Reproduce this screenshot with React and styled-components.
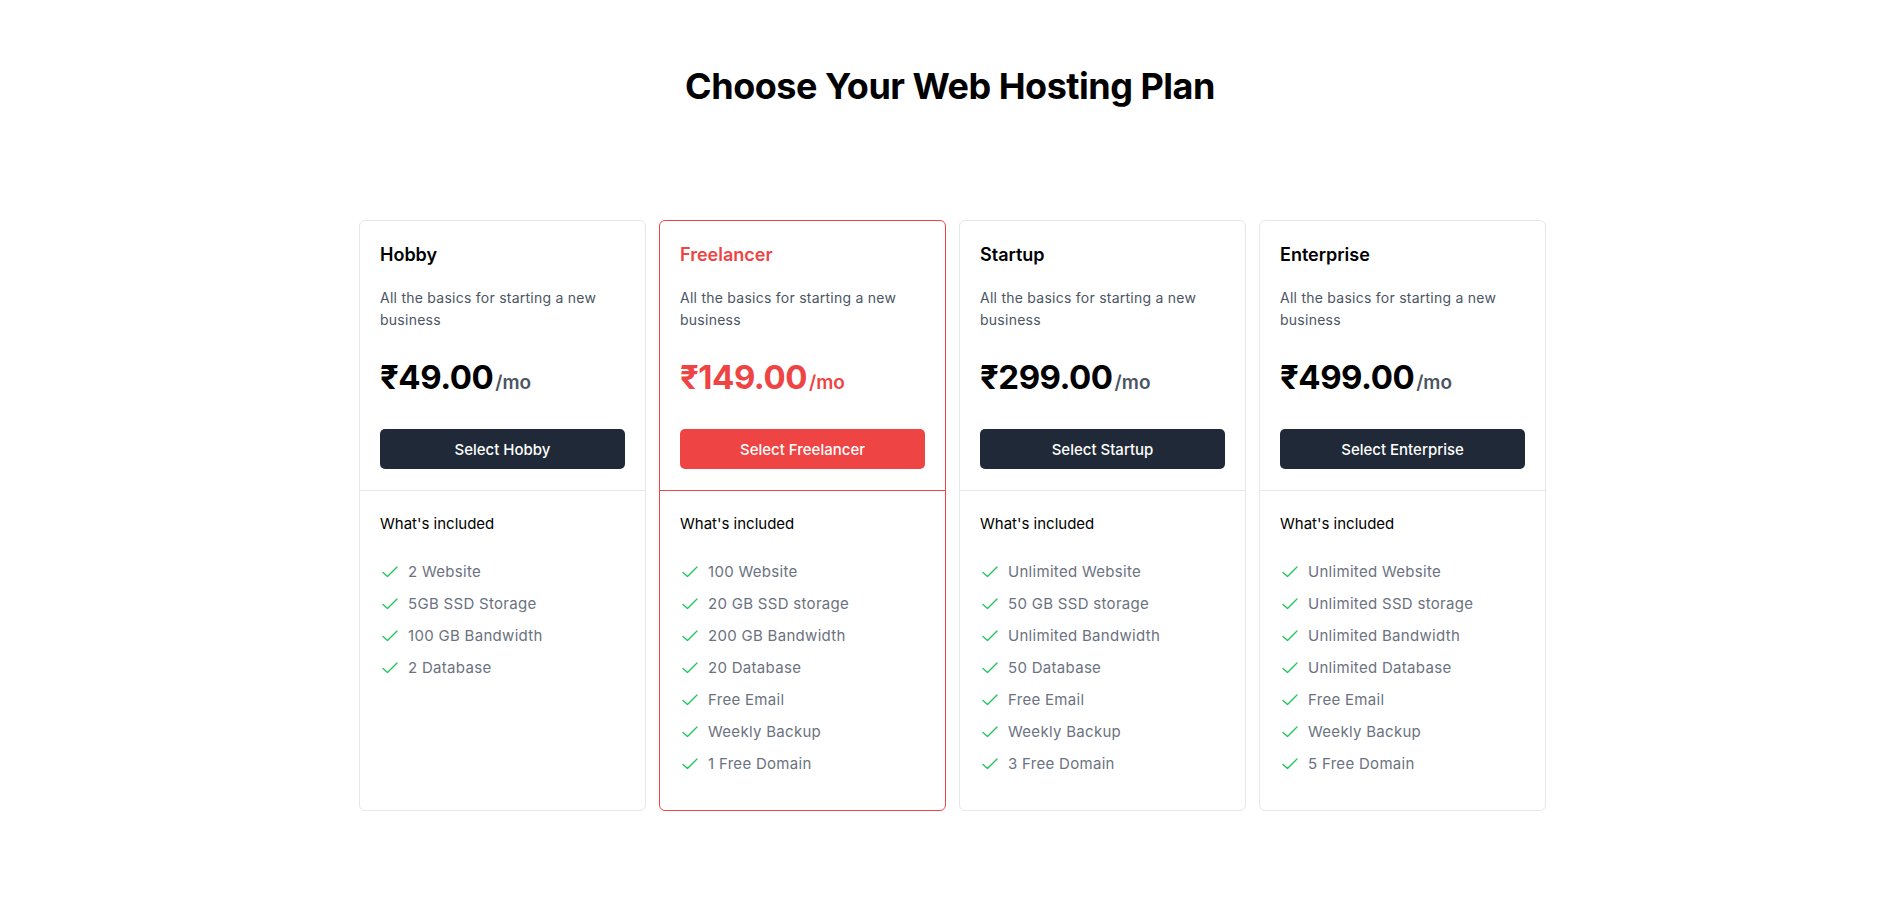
import styled, { createGlobalStyle } from 'styled-components'

const plans = [
  {
    name: 'Hobby',
    price: '49.00',
    features: ['2 Website', '5GB SSD Storage', '100 GB Bandwidth', '2 Database'],
  },
  {
    name: 'Freelancer',
    price: '149.00',
    featured: true,
    features: [
      '100 Website',
      '20 GB SSD storage',
      '200 GB Bandwidth',
      '20 Database',
      'Free Email',
      'Weekly Backup',
      '1 Free Domain',
    ],
  },
  {
    name: 'Startup',
    price: '299.00',
    features: [
      'Unlimited Website',
      '50 GB SSD storage',
      'Unlimited Bandwidth',
      '50 Database',
      'Free Email',
      'Weekly Backup',
      '3 Free Domain',
    ],
  },
  {
    name: 'Enterprise',
    price: '499.00',
    features: [
      'Unlimited Website',
      'Unlimited SSD storage',
      'Unlimited Bandwidth',
      'Unlimited Database',
      'Free Email',
      'Weekly Backup',
      '5 Free Domain',
    ],
  },
]

const CheckIcon = () => (
  <svg width="20" height="20" viewBox="0 0 20 20" fill="none">
    <path d="M3 10.5 L7.5 14.5 L17 5" stroke="#22c55e" strokeWidth="1.4" strokeLinecap="round" strokeLinejoin="round" />
  </svg>
)

function App() {
  return (
    <>
      <GlobalStyle />
      <Page>
        <Heading>Choose Your Web Hosting Plan</Heading>
        <Grid>
          {plans.map((plan) => (
            <Card key={plan.name} $featured={plan.featured}>
              <Top $featured={plan.featured}>
                <PlanName $featured={plan.featured}>{plan.name}</PlanName>
                <Desc>All the basics for starting a new business</Desc>
                <PriceRow>
                  <Price $featured={plan.featured}>₹{plan.price}</Price>
                  <Per $featured={plan.featured}>/mo</Per>
                </PriceRow>
                <SelectButton $featured={plan.featured}>Select {plan.name}</SelectButton>
              </Top>
              <Bottom>
                <Included>What's included</Included>
                <Features>
                  {plan.features.map((f) => (
                    <Feature key={f}>
                      <CheckIcon />
                      <span>{f}</span>
                    </Feature>
                  ))}
                </Features>
              </Bottom>
            </Card>
          ))}
        </Grid>
      </Page>
    </>
  )
}

export default App

const GlobalStyle = createGlobalStyle`
  * { box-sizing: border-box; }
  body {
    margin: 0;
    background: #fff;
    font-family: Inter, "Noto Sans", "DejaVu Sans", sans-serif;
    color: #111827;
  }
`

const Page = styled.div`
  display: flex;
  flex-direction: column;
  align-items: center;
  padding-top: 66px;
  padding-bottom: 100px;
`

const Heading = styled.h2`
  margin: 0;
  font-size: 36px;
  line-height: 40px;
  font-weight: 700;
  letter-spacing: -0.5px;
  color: #000;
`

const Grid = styled.div`
  margin-top: 114px;
  padding-left: 5px;
  display: grid;
  grid-template-columns: repeat(4, 287px);
  gap: 13px;
`

const Card = styled.div`
  border: 1px solid ${(p) => (p.$featured ? '#ef4444' : '#e5e7eb')};
  border-radius: 6px;
  background: #fff;
  display: flex;
  flex-direction: column;
`

const Top = styled.div`
  padding: 20px 20px 21px;
  border-bottom: 1px solid ${(p) => (p.$featured ? '#ef4444' : '#e5e7eb')};
`

const PlanName = styled.h3`
  margin: 0;
  font-size: 18px;
  line-height: 28px;
  font-weight: 600;
  color: ${(p) => (p.$featured ? '#ef4444' : '#000')};
`

const Desc = styled.p`
  margin: 18px 0 0;
  font-size: 14px;
  line-height: 22px;
  letter-spacing: 0.25px;
  color: #4b5563;
`

const PriceRow = styled.p`
  margin: 26px 0 0;
  display: flex;
  align-items: baseline;
  line-height: 40px;
`

const Price = styled.span`
  font-size: 33px;
  font-weight: 700;
  letter-spacing: -0.5px;
  color: ${(p) => (p.$featured ? '#ef4444' : '#000')};
`

const Per = styled.span`
  margin-left: 2px;
  font-size: 19px;
  font-weight: 600;
  color: ${(p) => (p.$featured ? '#ef4444' : '#4b5563')};
`

const SelectButton = styled.button`
  margin-top: 26px;
  width: 100%;
  height: 40px;
  border: none;
  border-radius: 5px;
  background: ${(p) => (p.$featured ? '#ef4444' : '#1f2937')};
  color: #fff;
  font-family: inherit;
  font-size: 15px;
  font-weight: 500;
  cursor: pointer;
`

const Bottom = styled.div`
  flex: 1;
  padding: 23px 20px 34px;
`

const Included = styled.h4`
  margin: 0;
  font-size: 15px;
  line-height: 20px;
  font-weight: 400;
  color: #000;
`

const Features = styled.ul`
  list-style: none;
  margin: 26px 0 0;
  padding: 0;
  display: flex;
  flex-direction: column;
  gap: 8px;
`

const Feature = styled.li`
  display: flex;
  align-items: center;
  gap: 8px;
  font-size: 15px;
  line-height: 24px;
  letter-spacing: 0.3px;
  color: #6b7280;
`
